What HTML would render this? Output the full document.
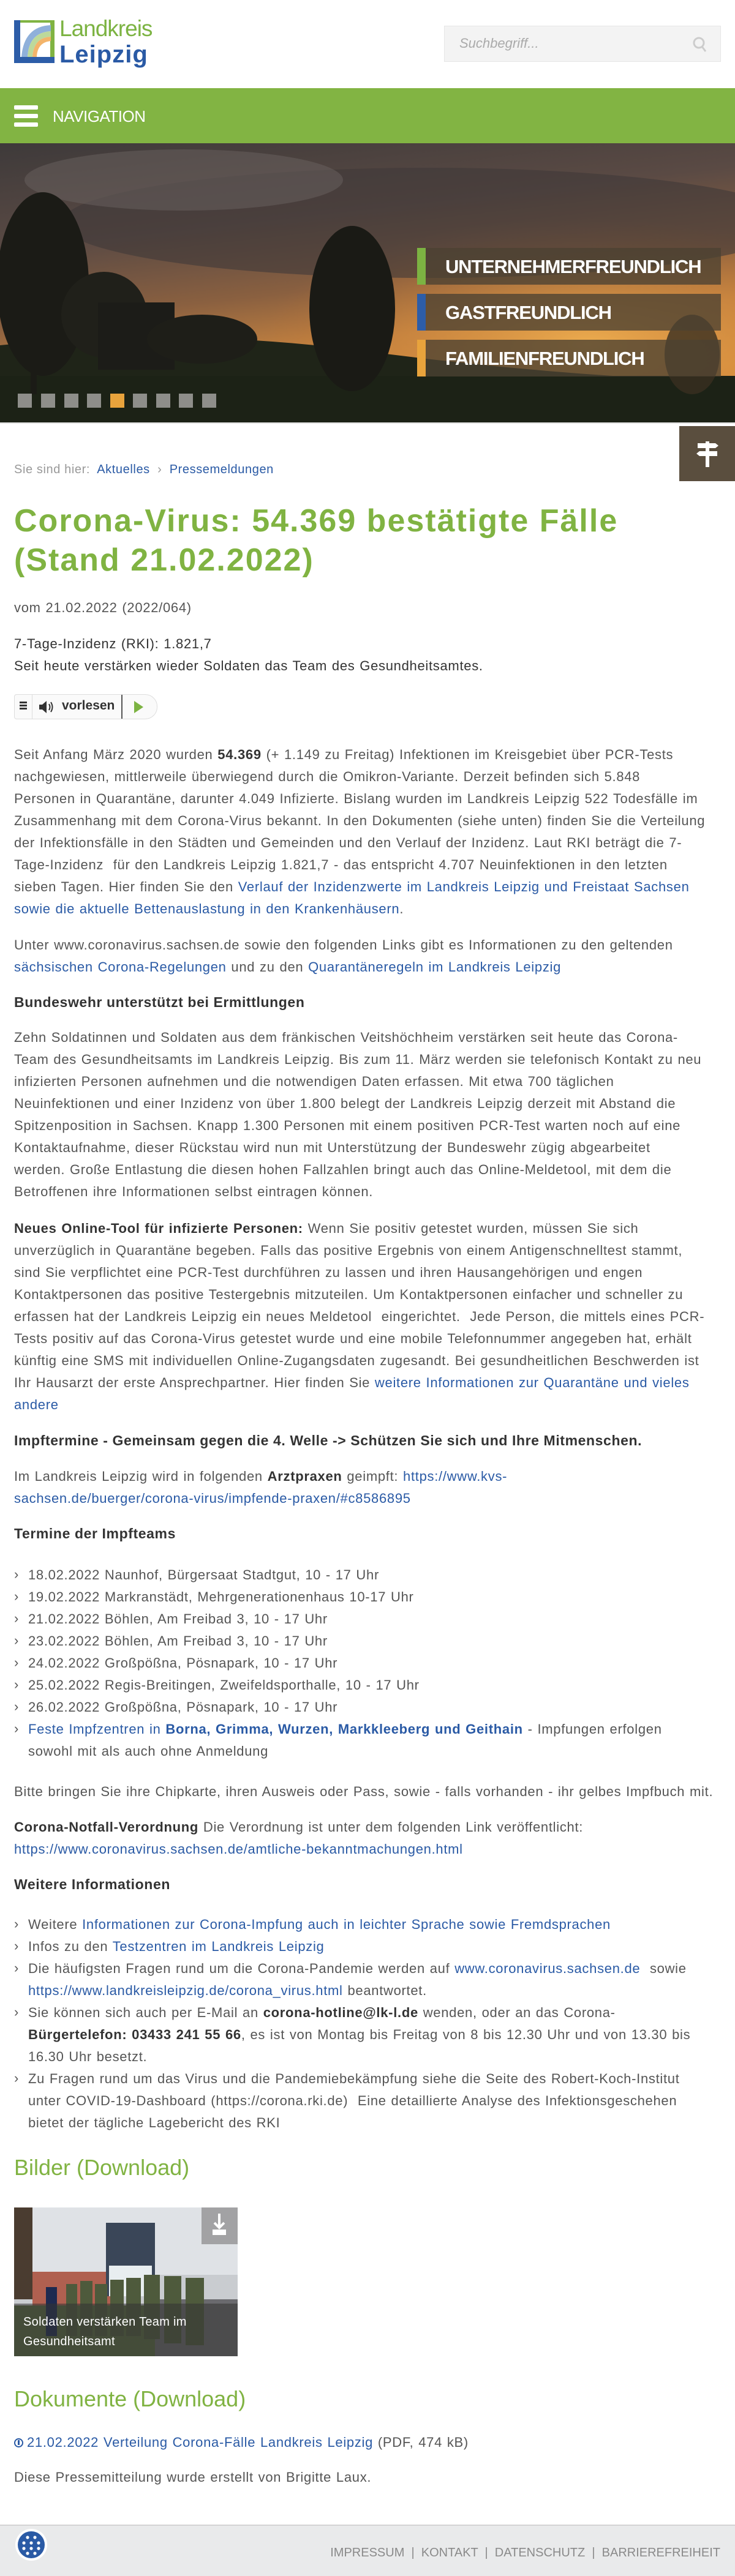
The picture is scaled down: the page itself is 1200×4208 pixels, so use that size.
<!DOCTYPE html>
<html><head><meta charset="utf-8">
<style>
*{margin:0;padding:0;box-sizing:border-box}
body{width:1200px;height:4208px;position:relative;background:#fff;font-family:"Liberation Sans",Arial,sans-serif;color:#555;overflow:hidden}
.a{position:absolute;left:23px;white-space:nowrap}
.t{font-size:22px;line-height:36px;letter-spacing:0.7px;word-spacing:1px}
a{color:#2a5aa5;text-decoration:none}
b{color:#333}
.h{font-size:23px;line-height:36px;font-weight:bold;color:#333;letter-spacing:0.6px}
ul{list-style:none}
li{position:relative;padding-left:25px}
li:before{content:"›";position:absolute;left:2px;top:-1px;color:#555;font-size:22px}
.g{color:#80b342;font-size:36px;line-height:44px}
</style></head><body>

<!-- header logo -->
<svg style="position:absolute;left:23px;top:33px" width="72" height="72" viewBox="0 0 72 72">
<rect x="0" y="0" width="66" height="70" fill="#2d5da8"/>
<rect x="10" y="0" width="56" height="60" fill="#80b342"/>
<rect x="10" y="4" width="49" height="56" fill="#fff"/>
<path d="M12 60 Q16 10 60 8 L60 18 Q24 20 22 60Z" fill="#8fb0da"/>
<path d="M22 60 Q24 20 60 18 L60 27 Q32 28 30 60Z" fill="#bcd99b"/>
<path d="M30 60 Q32 28 60 27 L60 34 Q38 36 37 60Z" fill="#f3b46a"/>
</svg>
<div style="position:absolute;left:97px;top:26px;font-size:37px;color:#7cb342;letter-spacing:-1px;line-height:42px">Landkreis</div>
<div style="position:absolute;left:97px;top:66px;font-size:40px;color:#2a5aa5;font-weight:bold;letter-spacing:1px;line-height:46px">Leipzig</div>

<!-- search -->
<div style="position:absolute;left:725px;top:42px;width:452px;height:59px;background:#f3f3f3;border:1px solid #e6e6e6"></div>
<div style="position:absolute;left:750px;top:58px;font-size:22px;font-style:italic;color:#aaa">Suchbegriff...</div>
<svg style="position:absolute;left:1131px;top:60px" width="24" height="26" viewBox="0 0 24 26"><circle cx="10" cy="10" r="8" fill="none" stroke="#ccc" stroke-width="3"/><path d="M15 16 L21 24" stroke="#ccc" stroke-width="3"/></svg>

<!-- nav -->
<div style="position:absolute;left:0;top:144px;width:1200px;height:90px;background:#82b443"></div>
<div style="position:absolute;left:23px;top:172px;width:39px;height:7px;background:#fff;border-radius:2px"></div>
<div style="position:absolute;left:23px;top:186px;width:39px;height:7px;background:#fff;border-radius:2px"></div>
<div style="position:absolute;left:23px;top:200px;width:39px;height:7px;background:#fff;border-radius:2px"></div>
<div style="position:absolute;left:86px;top:175px;font-size:26px;color:#fff;letter-spacing:-0.5px">NAVIGATION</div>

<!-- hero -->
<svg style="position:absolute;left:0;top:234px" width="1200" height="456" viewBox="0 0 1200 456">
<defs>
<linearGradient id="sky" x1="0" y1="0" x2="0.3" y2="1">
<stop offset="0" stop-color="#3e3a3a"/><stop offset="0.35" stop-color="#5a4a44"/><stop offset="0.6" stop-color="#8a6040"/><stop offset="0.78" stop-color="#c08040"/><stop offset="1" stop-color="#d89040"/>
</linearGradient>
<radialGradient id="sun" cx="0.8" cy="0.72" r="0.45"><stop offset="0" stop-color="#f0b050" stop-opacity="0.9"/><stop offset="1" stop-color="#c07030" stop-opacity="0"/></radialGradient>
</defs>
<rect width="1200" height="456" fill="url(#sky)"/>
<rect width="1200" height="456" fill="url(#sun)"/>
<ellipse cx="700" cy="130" rx="600" ry="90" fill="#3f3838" opacity="0.6"/>
<ellipse cx="300" cy="60" rx="260" ry="50" fill="#6a6260" opacity="0.5"/>
<path d="M0 330 Q300 300 600 340 Q900 380 1200 390 L1200 456 L0 456Z" fill="#1f2418"/>
<rect x="0" y="380" width="1200" height="76" fill="#1c2216"/>
<ellipse cx="70" cy="230" rx="75" ry="150" fill="#1b1b16"/>
<rect x="50" y="300" width="10" height="110" fill="#1b1b16"/>
<ellipse cx="170" cy="280" rx="70" ry="70" fill="#20201a"/>
<rect x="160" y="260" width="125" height="110" fill="#1c1c18"/>
<ellipse cx="330" cy="320" rx="90" ry="40" fill="#1e1e18"/>
<ellipse cx="575" cy="270" rx="70" ry="135" fill="#1a1a15"/>
<rect x="568" y="330" width="10" height="75" fill="#1a1a15"/>
<ellipse cx="1130" cy="345" rx="45" ry="65" fill="#3a3020" opacity="0.8"/>
</svg>
<div style="position:absolute;left:681px;top:405px;width:496px;height:60px;background:rgba(75,65,50,0.78);border-left:14px solid #7cb342"></div>
<div style="position:absolute;left:681px;top:480px;width:496px;height:60px;background:rgba(75,65,50,0.78);border-left:14px solid #2d5da8"></div>
<div style="position:absolute;left:681px;top:555px;width:496px;height:60px;background:rgba(75,65,50,0.78);border-left:14px solid #e8a33c"></div>
<div style="position:absolute;left:727px;top:418px;font-size:31px;font-weight:bold;color:#fff;letter-spacing:-1.2px">UNTERNEHMERFREUNDLICH</div>
<div style="position:absolute;left:727px;top:493px;font-size:31px;font-weight:bold;color:#fff;letter-spacing:-1.2px">GASTFREUNDLICH</div>
<div style="position:absolute;left:727px;top:568px;font-size:31px;font-weight:bold;color:#fff;letter-spacing:-1.2px">FAMILIENFREUNDLICH</div>
<div style="position:absolute;left:29px;top:643px">
<span style="position:absolute;left:0;width:23px;height:23px;background:#8e8e8a"></span>
<span style="position:absolute;left:38px;width:23px;height:23px;background:#8e8e8a"></span>
<span style="position:absolute;left:76px;width:23px;height:23px;background:#8e8e8a"></span>
<span style="position:absolute;left:113px;width:23px;height:23px;background:#8e8e8a"></span>
<span style="position:absolute;left:151px;width:23px;height:23px;background:#e8a33c"></span>
<span style="position:absolute;left:188px;width:23px;height:23px;background:#8e8e8a"></span>
<span style="position:absolute;left:226px;width:23px;height:23px;background:#8e8e8a"></span>
<span style="position:absolute;left:263px;width:23px;height:23px;background:#8e8e8a"></span>
<span style="position:absolute;left:301px;width:23px;height:23px;background:#8e8e8a"></span>
</div>
<div style="position:absolute;left:0;top:690px;width:1200px;height:2px;background:#e0e0e0"></div>

<!-- signpost -->
<div style="position:absolute;left:1109px;top:696px;width:91px;height:90px;background:#5a4e3e"></div>
<svg style="position:absolute;left:1130px;top:715px" width="50" height="50" viewBox="0 0 50 50">
<rect x="22" y="6" width="6" height="42" fill="#fff"/>
<path d="M9 9 H38 L43 13 L38 17 H9Z" fill="#fff"/>
<path d="M41 22 H12 L7 26 L12 30 H41Z" fill="#fff"/>
</svg>

<!-- breadcrumb -->
<div class="a" style="top:756px;font-size:20px;color:#999;letter-spacing:0.6px">Sie sind hier:&nbsp; <a>Aktuelles</a> &nbsp;›&nbsp; <a>Pressemeldungen</a></div>

<!-- title -->
<div class="a" style="top:819px;font-size:52px;line-height:64px;font-weight:bold;color:#80b342;letter-spacing:2px">Corona-Virus: 54.369 bestätigte Fälle<br>(Stand 21.02.2022)</div>

<div class="a t" style="top:975px">vom 21.02.2022 (2022/064)</div>
<div class="a t" style="top:1034px;color:#333">7-Tage-Inzidenz (RKI): 1.821,7<br>Seit heute verstärken wieder Soldaten das Team des Gesundheitsamtes.</div>

<!-- vorlesen -->
<div style="position:absolute;left:23px;top:1134px;width:234px;height:41px;border:1px solid #ddd;border-radius:4px 20px 20px 4px;background:#fafafa"></div>
<div style="position:absolute;left:52px;top:1135px;width:1px;height:39px;background:#ddd"></div>
<div style="position:absolute;left:198px;top:1135px;width:2px;height:39px;background:#555"></div>
<div style="position:absolute;left:32px;top:1146px;width:12px;height:3px;background:#333;box-shadow:0 5px 0 #333,0 10px 0 #333"></div>
<svg style="position:absolute;left:63px;top:1143px" width="26" height="24" viewBox="0 0 26 24"><path d="M1 8 H6 L13 2 V22 L6 16 H1Z" fill="#333"/><path d="M17 7 Q20 12 17 17" stroke="#333" stroke-width="2" fill="none"/><path d="M20 4 Q25 12 20 20" stroke="#333" stroke-width="2" fill="none"/></svg>
<div style="position:absolute;left:101px;top:1141px;font-size:21px;font-weight:bold;color:#333">vorlesen</div>
<svg style="position:absolute;left:218px;top:1144px" width="18" height="22" viewBox="0 0 18 22"><path d="M1 1 L16 11 L1 21Z" fill="#7cb342"/></svg>

<!-- body -->
<div class="a t" style="top:1215px">Seit Anfang März 2020 wurden <b>54.369</b> (+ 1.149 zu Freitag) Infektionen im Kreisgebiet über PCR-Tests<br>nachgewiesen, mittlerweile überwiegend durch die Omikron-Variante. Derzeit befinden sich 5.848<br>Personen in Quarantäne, darunter 4.049 Infizierte. Bislang wurden im Landkreis Leipzig 522 Todesfälle im<br>Zusammenhang mit dem Corona-Virus bekannt. In den Dokumenten (siehe unten) finden Sie die Verteilung<br>der Infektionsfälle in den Städten und Gemeinden und den Verlauf der Inzidenz. Laut RKI beträgt die 7-<br>Tage-Inzidenz&nbsp; für den Landkreis Leipzig 1.821,7 - das entspricht 4.707 Neuinfektionen in den letzten<br>sieben Tagen. Hier finden Sie den <a>Verlauf der Inzidenzwerte im Landkreis Leipzig und Freistaat Sachsen</a><br><a>sowie die aktuelle Bettenauslastung in den Krankenhäusern</a>.</div>

<div class="a t" style="top:1526px">Unter www.coronavirus.sachsen.de sowie den folgenden Links gibt es Informationen zu den geltenden<br><a>sächsischen Corona-Regelungen</a> und zu den <a>Quarantäneregeln im Landkreis Leipzig</a></div>

<div class="a h" style="top:1619px">Bundeswehr unterstützt bei Ermittlungen</div>

<div class="a t" style="top:1677px">Zehn Soldatinnen und Soldaten aus dem fränkischen Veitshöchheim verstärken seit heute das Corona-<br>Team des Gesundheitsamts im Landkreis Leipzig. Bis zum 11. März werden sie telefonisch Kontakt zu neu<br>infizierten Personen aufnehmen und die notwendigen Daten erfassen. Mit etwa 700 täglichen<br>Neuinfektionen und einer Inzidenz von über 1.800 belegt der Landkreis Leipzig derzeit mit Abstand die<br>Spitzenposition in Sachsen. Knapp 1.300 Personen mit einem positiven PCR-Test warten noch auf eine<br>Kontaktaufnahme, dieser Rückstau wird nun mit Unterstützung der Bundeswehr zügig abgearbeitet<br>werden. Große Entlastung die diesen hohen Fallzahlen bringt auch das Online-Meldetool, mit dem die<br>Betroffenen ihre Informationen selbst eintragen können.</div>

<div class="a t" style="top:1989px"><b>Neues Online-Tool für infizierte Personen:</b> Wenn Sie positiv getestet wurden, müssen Sie sich<br>unverzüglich in Quarantäne begeben. Falls das positive Ergebnis von einem Antigenschnelltest stammt,<br>sind Sie verpflichtet eine PCR-Test durchführen zu lassen und ihren Hausangehörigen und engen<br>Kontaktpersonen das positive Testergebnis mitzuteilen. Um Kontaktpersonen einfacher und schneller zu<br>erfassen hat der Landkreis Leipzig ein neues Meldetool&nbsp; eingerichtet.&nbsp; Jede Person, die mittels eines PCR-<br>Tests positiv auf das Corona-Virus getestet wurde und eine mobile Telefonnummer angegeben hat, erhält<br>künftig eine SMS mit individuellen Online-Zugangsdaten zugesandt. Bei gesundheitlichen Beschwerden ist<br>Ihr Hausarzt der erste Ansprechpartner. Hier finden Sie <a>weitere Informationen zur Quarantäne und vieles</a><br><a>andere</a></div>

<div class="a h" style="top:2335px">Impftermine - Gemeinsam gegen die 4. Welle -&gt; Schützen Sie sich und Ihre Mitmenschen.</div>

<div class="a t" style="top:2394px">Im Landkreis Leipzig wird in folgenden <b>Arztpraxen</b> geimpft: <a>https://www.kvs-</a><br><a>sachsen.de/buerger/corona-virus/impfende-praxen/#c8586895</a></div>

<div class="a h" style="top:2487px">Termine der Impfteams</div>

<ul class="a t" style="top:2555px;left:21px">
<li>18.02.2022 Naunhof, Bürgersaat Stadtgut, 10 - 17 Uhr</li>
<li>19.02.2022 Markranstädt, Mehrgenerationenhaus 10-17 Uhr</li>
<li>21.02.2022 Böhlen, Am Freibad 3, 10 - 17 Uhr</li>
<li>23.02.2022 Böhlen, Am Freibad 3, 10 - 17 Uhr</li>
<li>24.02.2022 Großpößna, Pösnapark, 10 - 17 Uhr</li>
<li>25.02.2022 Regis-Breitingen, Zweifeldsporthalle, 10 - 17 Uhr</li>
<li>26.02.2022 Großpößna, Pösnapark, 10 - 17 Uhr</li>
<li><a>Feste Impfzentren in <b style="color:#2a5aa5">Borna, Grimma, Wurzen, Markkleeberg und Geithain</b></a> - Impfungen erfolgen<br>sowohl mit als auch ohne Anmeldung</li>
</ul>

<div class="a t" style="top:2909px">Bitte bringen Sie ihre Chipkarte, ihren Ausweis oder Pass, sowie - falls vorhanden - ihr gelbes Impfbuch mit.</div>

<div class="a t" style="top:2967px"><b>Corona-Notfall-Verordnung</b> Die Verordnung ist unter dem folgenden Link veröffentlicht:<br><a>https://www.coronavirus.sachsen.de/amtliche-bekanntmachungen.html</a></div>

<div class="a h" style="top:3060px">Weitere Informationen</div>

<ul class="a t" style="top:3126px;left:21px">
<li>Weitere <a>Informationen zur Corona-Impfung auch in leichter Sprache sowie Fremdsprachen</a></li>
<li>Infos zu den <a>Testzentren im Landkreis Leipzig</a></li>
<li>Die häufigsten Fragen rund um die Corona-Pandemie werden auf <a>www.coronavirus.sachsen.de</a>&nbsp; sowie<br><a>https://www.landkreisleipzig.de/corona_virus.html</a> beantwortet.</li>
<li>Sie können sich auch per E-Mail an <b>corona-hotline@lk-l.de</b> wenden, oder an das Corona-<br><b>Bürgertelefon: 03433 241 55 66</b>, es ist von Montag bis Freitag von 8 bis 12.30 Uhr und von 13.30 bis<br>16.30 Uhr besetzt.</li>
<li>Zu Fragen rund um das Virus und die Pandemiebekämpfung siehe die Seite des Robert-Koch-Institut<br>unter COVID-19-Dashboard (https://corona.rki.de)&nbsp; Eine detaillierte Analyse des Infektionsgeschehen<br>bietet der tägliche Lagebericht des RKI</li>
</ul>

<div class="a g" style="top:3519px">Bilder (Download)</div>

<!-- image card -->
<svg style="position:absolute;left:23px;top:3606px" width="365" height="243" viewBox="0 0 365 243">
<rect width="365" height="243" fill="#c9ccd0"/>
<rect x="0" y="0" width="365" height="110" fill="#dfe2e6"/>
<rect x="30" y="105" width="140" height="60" fill="#b06050"/>
<rect x="150" y="25" width="80" height="120" fill="#3a4658"/>
<rect x="155" y="95" width="70" height="50" fill="#e8eef0"/>
<rect x="0" y="0" width="30" height="150" fill="#4a3c30"/>
<rect x="0" y="160" width="365" height="83" fill="#5a6a40"/>
<rect x="230" y="150" width="135" height="93" fill="#6a6a6e"/>
<g fill="#4e5a3c">
<rect x="85" y="125" width="18" height="85"/><rect x="108" y="120" width="20" height="90"/><rect x="132" y="125" width="20" height="85"/><rect x="157" y="118" width="22" height="92"/><rect x="183" y="115" width="24" height="95"/><rect x="212" y="110" width="26" height="105"/><rect x="245" y="112" width="28" height="110"/><rect x="280" y="115" width="30" height="110"/>
</g>
<rect x="52" y="130" width="18" height="80" fill="#1e2a50"/>
<rect x="306" y="0" width="59" height="60" fill="#888" opacity="0.7"/>
<rect x="0" y="157" width="365" height="86" fill="#333" opacity="0.55"/>
<path d="M335 10 V32 M327 25 L335 33 L343 25" stroke="#fff" stroke-width="4" fill="none"/>
<rect x="324" y="36" width="22" height="9" fill="#fff"/>
</svg>
<div style="position:absolute;left:38px;top:3777px;font-size:20px;line-height:32px;color:#fff;letter-spacing:0.3px">Soldaten verstärken Team im<br>Gesundheitsamt</div>

<div class="a g" style="top:3897px">Dokumente (Download)</div>

<div class="a t" style="top:3972px"><span style="display:inline-block;width:15px;height:15px;border:2px solid #2a5aa5;border-radius:50%;vertical-align:-1px;margin-right:6px;position:relative"><span style="position:absolute;left:4px;top:1px;width:3px;height:8px;background:#2a5aa5"></span></span><a>21.02.2022 Verteilung Corona-Fälle Landkreis Leipzig</a> (PDF, 474 kB)</div>

<div class="a t" style="top:4029px">Diese Pressemitteilung wurde erstellt von Brigitte Laux.</div>

<!-- footer -->
<div style="position:absolute;left:0;top:4124px;width:1200px;height:84px;background:#e9eaeb;border-top:2px solid #d4d4d4"></div>
<svg style="position:absolute;left:24px;top:4130px" width="54" height="54" viewBox="0 0 54 54">
<circle cx="27" cy="27" r="26" fill="#fff"/>
<circle cx="27" cy="27" r="22" fill="#2a5aa5"/>
<g fill="#fff"><circle cx="21" cy="15" r="2.6"/><circle cx="33" cy="15" r="2.6"/><circle cx="15" cy="24" r="2.6"/><circle cx="27" cy="24" r="2.6"/><circle cx="39" cy="24" r="2.6"/><circle cx="15" cy="33" r="2.6"/><circle cx="27" cy="33" r="2.6"/><circle cx="39" cy="33" r="2.6"/><circle cx="21" cy="41" r="2.6"/><circle cx="33" cy="41" r="2.6"/></g>
</svg>
<div style="position:absolute;right:24px;top:4159px;font-size:20px;color:#8a8a8a;white-space:nowrap">IMPRESSUM &nbsp;|&nbsp; KONTAKT &nbsp;|&nbsp; DATENSCHUTZ &nbsp;|&nbsp; BARRIEREFREIHEIT</div>

</body></html>
